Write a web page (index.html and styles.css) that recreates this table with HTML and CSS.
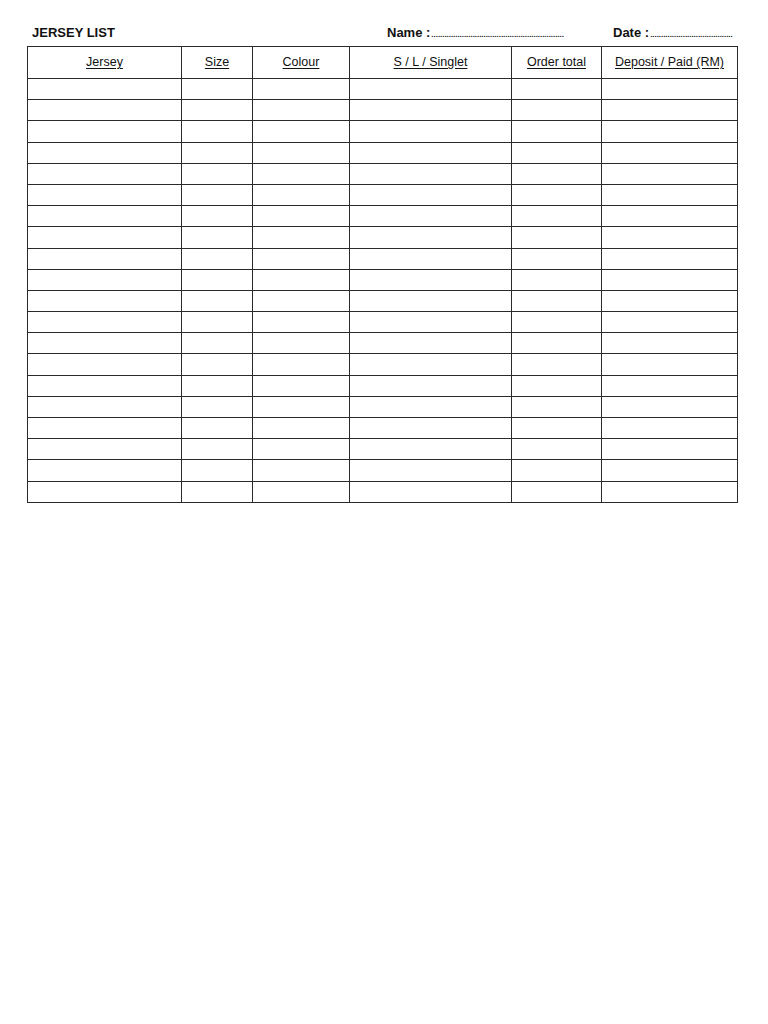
FILE: index.html
```html
<!DOCTYPE html>
<html>
<head>
<meta charset="utf-8">
<link rel="stylesheet" href="styles.css">
</head>
<body>
<div class="page">
  <div class="top">
    <div class="title">JERSEY LIST</div>
    <div class="field name">Name :<span class="dots">.............................................................</span></div>
    <div class="field date">Date :<span class="dots">......................................</span></div>
  </div>
  <table class="sheet">
    <colgroup>
      <col class="c1"><col class="c2"><col class="c3"><col class="c4"><col class="c5"><col class="c6">
    </colgroup>
    <thead>
      <tr><th><span>Jersey</span></th><th><span>Size</span></th><th><span>Colour</span></th><th><span>S / L / Singlet</span></th><th><span>Order total</span></th><th><span>Deposit / Paid (RM)</span></th></tr>
    </thead>
    <tbody>
      <tr><td></td><td></td><td></td><td></td><td></td><td></td></tr>
      <tr><td></td><td></td><td></td><td></td><td></td><td></td></tr>
      <tr><td></td><td></td><td></td><td></td><td></td><td></td></tr>
      <tr><td></td><td></td><td></td><td></td><td></td><td></td></tr>
      <tr><td></td><td></td><td></td><td></td><td></td><td></td></tr>
      <tr><td></td><td></td><td></td><td></td><td></td><td></td></tr>
      <tr><td></td><td></td><td></td><td></td><td></td><td></td></tr>
      <tr><td></td><td></td><td></td><td></td><td></td><td></td></tr>
      <tr><td></td><td></td><td></td><td></td><td></td><td></td></tr>
      <tr><td></td><td></td><td></td><td></td><td></td><td></td></tr>
      <tr><td></td><td></td><td></td><td></td><td></td><td></td></tr>
      <tr><td></td><td></td><td></td><td></td><td></td><td></td></tr>
      <tr><td></td><td></td><td></td><td></td><td></td><td></td></tr>
      <tr><td></td><td></td><td></td><td></td><td></td><td></td></tr>
      <tr><td></td><td></td><td></td><td></td><td></td><td></td></tr>
      <tr><td></td><td></td><td></td><td></td><td></td><td></td></tr>
      <tr><td></td><td></td><td></td><td></td><td></td><td></td></tr>
      <tr><td></td><td></td><td></td><td></td><td></td><td></td></tr>
      <tr><td></td><td></td><td></td><td></td><td></td><td></td></tr>
      <tr><td></td><td></td><td></td><td></td><td></td><td></td></tr>
    </tbody>
  </table>
</div>
</body>
</html>
```
FILE: styles.css
```css
html, body {
  margin: 0;
  padding: 0;
  background: #fff;
}
body {
  font-family: "Liberation Sans", Arial, sans-serif;
  color: #111;
}
.page {
  padding: 25px 0 0 27px;
}
.top {
  display: flex;
  align-items: baseline;
  height: 16px;
  line-height: 16px;
  margin-bottom: 5px;
  font-size: 13px;
  font-weight: bold;
}
.title {
  width: 360px;
  padding-left: 5px;
  box-sizing: border-box;
}
.name {
  width: 226px;
}
.field {
  white-space: nowrap;
  overflow: hidden;
}
.dots {
  font-size: 8px;
  font-weight: bold;
  letter-spacing: -0.05px;
  margin-left: 1px;
}
.sheet {
  border-collapse: collapse;
  table-layout: fixed;
  width: 710px;
}
.c1 { width: 154px; }
.c2 { width: 71px; }
.c3 { width: 97px; }
.c4 { width: 162px; }
.c5 { width: 90px; }
.c6 { width: 136px; }
.sheet th, .sheet td {
  border: 1px solid #2a2a2a;
  padding: 0;
}
.sheet th {
  height: 30px;
  font-size: 12.5px;
  font-weight: normal;
  text-align: center;
  vertical-align: middle;
  padding-bottom: 1px;
}
.sheet th span {
  text-decoration: underline;
  text-underline-offset: 2px;
}
.sheet tbody tr {
  height: 21.2px;
}
```
